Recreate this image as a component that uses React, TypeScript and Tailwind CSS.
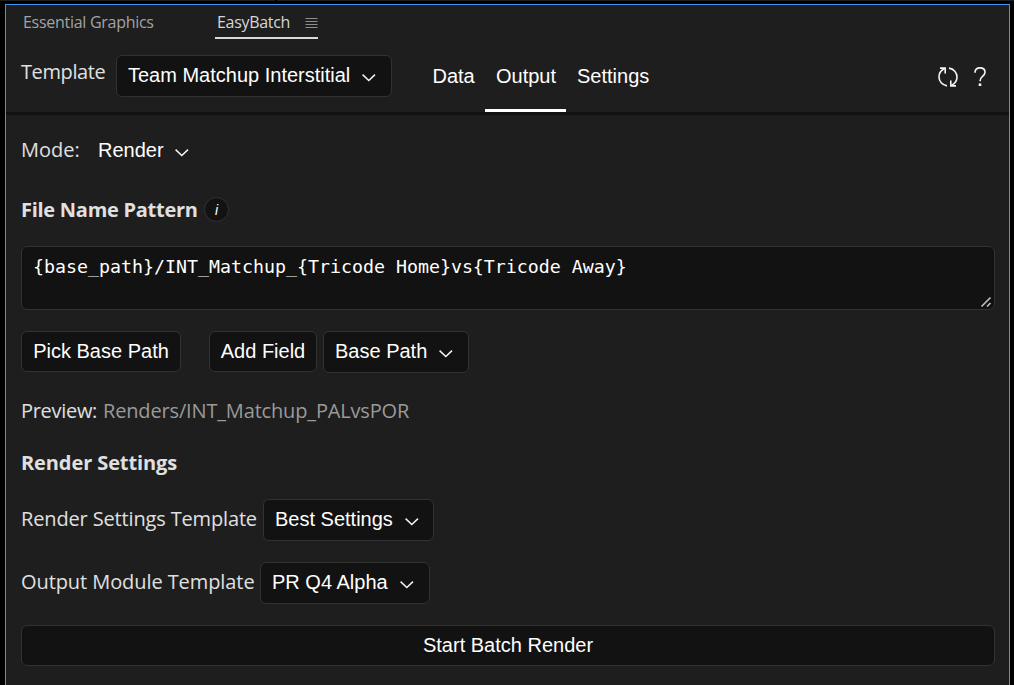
import type { ReactNode } from "react";

const ARIAL = "font-['Liberation_Sans',Arial,sans-serif]";
const BOX = "box-border rounded-[6px] border border-[#323232] bg-[#121212] text-white";

function Chevron() {
  return (
    <svg width="14" height="8" viewBox="0 0 14 8" fill="none" className="shrink-0">
      <path d="M0.6 0.6 L6.8 6.5 L13 0.6" stroke="#f6f6f6" strokeWidth="1.45" />
    </svg>
  );
}

function Select({ label, className }: { label: string; className: string }) {
  return (
    <button className={`${ARIAL} ${BOX} flex h-[42px] shrink-0 items-start whitespace-nowrap pl-[11px] text-[20px] leading-[23px] ${className}`}>
      <span className="mt-[8px]">{label}</span>
      <span className="ml-[12px] mt-[18px] flex">
        <Chevron />
      </span>
    </button>
  );
}

function Button({ children, className }: { children: ReactNode; className: string }) {
  return (
    <button className={`${ARIAL} ${BOX} flex h-[41px] shrink-0 items-start justify-center whitespace-nowrap pt-[8px] text-[20px] leading-[23px] ${className}`}>
      {children}
    </button>
  );
}

function RefreshIcon() {
  return (
    <svg width="20" height="20" viewBox="0 0 20 20" fill="none" stroke="#f4f4f4" strokeWidth="1.6">
      <path d="M9 18.9 C4.2 18.2 1 14.4 1 10 C1 6.4 3 3.4 6.4 1.8" />
      <path d="M2 1.1 H7.2 V6.4" />
      <path d="M11 1.1 C15.8 1.8 19 5.6 19 10 C19 13.6 17 16.6 13.6 18.2" />
      <path d="M18 18.9 H12.8 V13.6" />
    </svg>
  );
}

function HelpIcon() {
  return (
    <svg width="12" height="20" viewBox="0 0 12 20" fill="none">
      <path d="M1 5.8 C1 2.7 3 0.9 6 0.9 C9 0.9 11 2.6 11 5.2 C11 7.4 9.8 8.4 8.3 9.6 C6.7 10.9 6 11.7 6 14.2" stroke="#f4f4f4" strokeWidth="1.6" />
      <rect x="4.7" y="16.4" width="2.6" height="2.6" fill="#f4f4f4" />
    </svg>
  );
}

export default function App() {
  return (
    <div className="flex h-[685px] w-[1014px] flex-col overflow-hidden bg-black font-['Open_Sans','Noto_Sans',sans-serif] text-[20px] leading-[26px] text-[#e0e0e0]">
      <div className="flex h-px shrink-0 gap-[2px]">
        <div className="w-[275px] bg-[#1e1e1e]" />
        <div className="flex-1 bg-[#1e1e1e]" />
      </div>
      <div className="ml-[5px] mt-[3px] box-border flex w-[1005px] flex-1 flex-col border-x border-t border-[#4096f3] bg-[#1e1e1e]">
        <div className="flex h-[34px] shrink-0 items-start text-[16px] leading-[22px]">
          <div className="ml-[17px] mt-[6px] w-[192px] whitespace-nowrap tracking-[-0.28px] text-[#a3a3a3]">Essential Graphics</div>
          <div className="flex h-[34px] w-[103px] items-start border-b-2 border-[#d9d9d9] pl-[2px]">
            <span className="mt-[6px] w-[89px] tracking-[-0.3px] text-[#d6d6d6]">EasyBatch</span>
            <svg width="13" height="12" viewBox="0 0 13 12" className="mt-[12px] shrink-0">
              <path d="M0.5 1.5h12M0.5 4.5h12M0.5 7.5h12M0.5 10.5h12" stroke="#8f8f8f" strokeWidth="1.2" />
            </svg>
          </div>
        </div>

        <div className="flex h-[76px] shrink-0 items-start border-b-[3px] border-[#111111] pl-[15px]">
          <span className="mt-[20px] w-[95px] tracking-[-0.4px]">Template</span>
          <Select label="Team Matchup Interstitial" className="mt-[16px] w-[276px]" />
          <nav className={`${ARIAL} ml-[29px] flex leading-[23px] text-white`}>
            <span className="h-[73px] w-[64px] pl-[11.5px] pt-[26px]">Data</span>
            <span className="h-[73px] w-[81px] border-b-[3px] border-white pl-[11px] pt-[26px]">Output</span>
            <span className="h-[73px] w-[94px] pl-[11px] pt-[26px]">Settings</span>
          </nav>
          <div className="ml-auto mr-[23px] mt-[28px] flex gap-[16px]">
            <RefreshIcon />
            <HelpIcon />
          </div>
        </div>

        <div className="flex flex-1 flex-col pl-[15px] pr-[14px]">
          <div className="mt-[22px] flex h-[26px] shrink-0 items-start">
            <span className="w-[77px]">Mode:</span>
            <span className={`${ARIAL} mt-[2px] leading-[23px] text-white`}>Render</span>
            <span className="ml-[11px] mt-[12px] flex">
              <Chevron />
            </span>
          </div>

          <div className="mt-[34px] flex h-[26px] shrink-0 items-start">
            <h2 className="w-[183px] whitespace-nowrap font-bold tracking-[-0.27px]">File Name Pattern</h2>
            <span className="flex h-[25px] w-[25px] items-center justify-center rounded-full border border-[#323232] bg-[#121212] font-['Liberation_Sans',sans-serif] text-[14px] italic text-white">i</span>
          </div>

          <div className={`${BOX} mt-[23px] flex h-[64px] shrink-0 justify-between pl-[11px] pt-[8px] font-['DejaVu_Sans_Mono',monospace] text-[18.27px] leading-[24px]`}>
            <span className="whitespace-pre">{"{base_path}/INT_Matchup_{Tricode Home}vs{Tricode Away}"}</span>
            <svg width="12" height="12" viewBox="0 0 12 12" className="mb-[1px] mr-[2px] self-end">
              <path d="M1.5 10.5 L10.5 1.5 M7 10.5 L10.5 7" stroke="#bdbdbd" strokeWidth="1.7" />
            </svg>
          </div>

          <div className="mt-[21px] flex h-[42px] shrink-0 items-start">
            <Button className="w-[160px]">Pick Base Path</Button>
            <Button className="ml-[28px] w-[108px]">Add Field</Button>
            <Select label="Base Path" className="ml-[6px] w-[146px]" />
          </div>

          <div className="mt-[25px] flex h-[26px] shrink-0 whitespace-nowrap">
            <span className="w-[82px] tracking-[-0.3px]">Preview:</span>
            <span className="tracking-[-0.16px] text-[#9a9a9a]">Renders/INT_Matchup_PALvsPOR</span>
          </div>

          <h2 className="mt-[26px] h-[26px] shrink-0 whitespace-nowrap font-bold tracking-[-0.1px]">Render Settings</h2>

          <div className="mt-[23px] flex h-[42px] shrink-0 items-start whitespace-nowrap">
            <span className="mt-[7px] w-[242px] tracking-[-0.15px]">Render Settings Template</span>
            <Select label="Best Settings" className="w-[171px]" />
          </div>

          <div className="mt-[21px] flex h-[42px] shrink-0 items-start whitespace-nowrap">
            <span className="mt-[7px] w-[239px] tracking-[-0.08px]">Output Module Template</span>
            <Select label="PR Q4 Alpha" className="w-[170px]" />
          </div>

          <Button className="mt-[21px] w-full">Start Batch Render</Button>
        </div>
      </div>
    </div>
  );
}
